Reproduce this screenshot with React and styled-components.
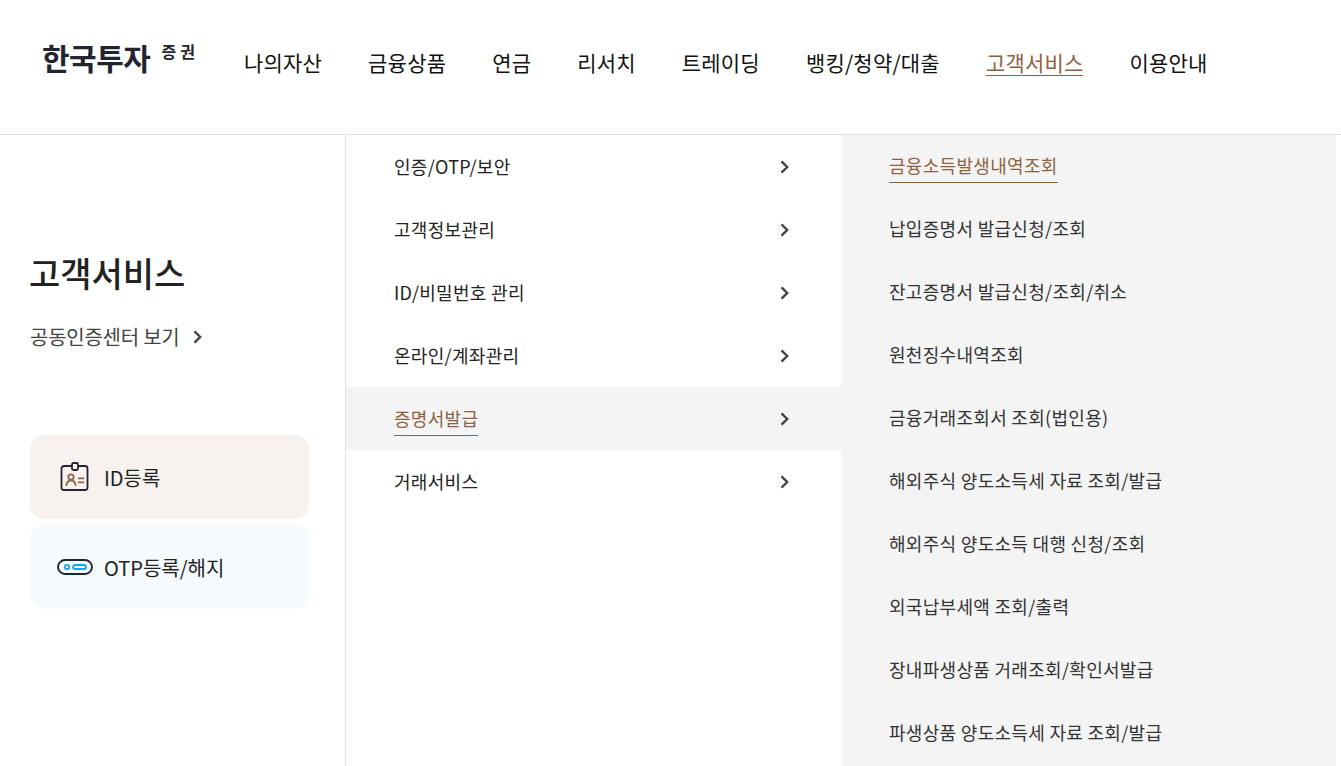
import styled, { createGlobalStyle } from "styled-components"

const GlobalStyle = createGlobalStyle`
  html, body {
    margin: 0;
    height: 100%;
    overflow: hidden;
    background: #fff;
  }

  body {
    font-family: "Noto Sans CJK KR", "Noto Sans", sans-serif;
    color: #222;
  }

  * {
    box-sizing: border-box;
  }
`

const Page = styled.div`
  height: 766px;
  overflow: hidden;
`

const Header = styled.header`
  height: 135px;
  display: flex;
  border-bottom: 1px solid #e0e0e0;
`

const Logo = styled.div`
  width: 244px;
  padding: 36px 0 0 42px;
  display: flex;
  align-items: flex-start;
  color: #22252f;
`

const LogoName = styled.span`
  font-size: 30px;
  line-height: 42px;
  font-weight: 700;
  letter-spacing: -0.5px;
`

const LogoSub = styled.span`
  font-size: 16px;
  line-height: 20px;
  font-weight: 700;
  letter-spacing: 4px;
  margin: 5px 0 0 11px;
`

const Nav = styled.nav`
  display: flex;
  gap: 46px;
  padding-top: 46px;
`

const NavItem = styled.a`
  height: 30px;
  font-size: 21px;
  line-height: 32px;
  letter-spacing: 0.2px;
  color: ${(p) => (p.$active ? "#8f623f" : "#111")};
  border-bottom: ${(p) => (p.$active ? "1px solid #8f623f" : "none")};
`

const Body = styled.div`
  height: 631px;
  display: grid;
  grid-template-columns: 345px 496px 495px 5px;
`

const Side = styled.aside`
  padding: 111px 30px 0 30px;
`

const Title = styled.h2`
  margin: 0 0 0 -1px;
  font-size: 34px;
  line-height: 54px;
  font-weight: 500;
  color: #222;
`

const CertLink = styled.a`
  margin-top: 20px;
  display: flex;
  align-items: center;
  gap: 12px;
  font-size: 20px;
  line-height: 34px;
  letter-spacing: -0.25px;
  color: #444;
`

const Cards = styled.div`
  margin-top: 81px;
  width: 279px;
  display: flex;
  flex-direction: column;
  gap: 6px;
`

const Card = styled.a`
  height: 84px;
  border-radius: 14px;
  background: ${(p) => p.$bg};
  display: flex;
  align-items: center;
  gap: 11px;
  padding-left: 27px;
  font-size: 20px;
  color: #222;
`

const CardIcon = styled.span`
  width: 36px;
  display: flex;
  justify-content: center;
`

const Middle = styled.div`
  border-left: 1px solid #e0e0e0;
`

const MenuRow = styled.a`
  height: 63px;
  display: flex;
  align-items: center;
  justify-content: space-between;
  padding: 0 49px 0 48px;
  background: ${(p) => (p.$active ? "#f4f4f4" : "transparent")};
`

const MenuLabel = styled.span`
  font-size: 18px;
  line-height: 32px;
  padding-bottom: 1px;
  letter-spacing: 0.3px;
  color: ${(p) => (p.$active ? "#8f623f" : "#222")};
  border-bottom: 1px solid ${(p) => (p.$active ? "#8f623f" : "transparent")};
`

const Right = styled.div`
  background: #f4f4f4;
  padding: 0 48px;
`

const SubRow = styled.div`
  height: 63px;
  display: flex;
  align-items: center;
`

const SubLabel = styled.a`
  font-size: 18px;
  line-height: 28px;
  padding-bottom: 3px;
  letter-spacing: 0.3px;
  color: ${(p) => (p.$active ? "#8f623f" : "#333")};
  border-bottom: 1px solid ${(p) => (p.$active ? "#8f623f" : "transparent")};
`

const Chevron = () => (
  <svg width="14" height="14" viewBox="0 0 14 14" fill="none">
    <path d="M3.500 1.300 9.200 7 3.500 12.700" stroke="#444" strokeWidth="2.400" />
  </svg>
)

const IdIcon = () => (
  <svg width="30" height="30" viewBox="0 0 30 30" fill="none">
    <path d="M12 4H4a2.500 2.500 0 0 0-2.500 2.500v19A2.500 2.500 0 0 0 4 28h21a2.500 2.500 0 0 0 2.500-2.500v-19A2.500 2.500 0 0 0 25 4h-7" stroke="#22252f" strokeWidth="1.800" />
    <rect x="12" y="1" width="6" height="7" rx="1.500" stroke="#22252f" strokeWidth="1.800" />
    <circle cx="11" cy="15" r="2.700" stroke="#8f6a4f" strokeWidth="1.800" />
    <path d="M6.300 24c.3-3.500 2-5.500 4.700-5.500s4.400 2 4.700 5.500" stroke="#8f6a4f" strokeWidth="1.800" />
    <path d="M18 16.300h6.300M18 20.300h6.300" stroke="#8f6a4f" strokeWidth="1.800" />
  </svg>
)

const OtpIcon = () => (
  <svg width="36" height="16" viewBox="0 0 36 16" fill="none">
    <rect x="1" y="1" width="34" height="14" rx="7" stroke="#22252f" strokeWidth="1.900" />
    <circle cx="10" cy="8" r="2.200" stroke="#12a5f5" strokeWidth="1.800" />
    <rect x="16" y="6" width="13" height="4" rx="2" stroke="#12a5f5" strokeWidth="1.800" />
  </svg>
)

const navItems = ["나의자산", "금융상품", "연금", "리서치", "트레이딩", "뱅킹/청약/대출", "고객서비스", "이용안내"]
const menuItems = ["인증/OTP/보안", "고객정보관리", "ID/비밀번호 관리", "온라인/계좌관리", "증명서발급", "거래서비스"]
const subItems = [
  "금융소득발생내역조회",
  "납입증명서 발급신청/조회",
  "잔고증명서 발급신청/조회/취소",
  "원천징수내역조회",
  "금융거래조회서 조회(법인용)",
  "해외주식 양도소득세 자료 조회/발급",
  "해외주식 양도소득 대행 신청/조회",
  "외국납부세액 조회/출력",
  "장내파생상품 거래조회/확인서발급",
  "파생상품 양도소득세 자료 조회/발급",
]

export default function App() {
  return (
    <Page>
      <GlobalStyle />
      <Header>
        <Logo>
          <LogoName>한국투자</LogoName>
          <LogoSub>증권</LogoSub>
        </Logo>
        <Nav>
          {navItems.map((item) => (
            <NavItem key={item} $active={item === "고객서비스"}>
              {item}
            </NavItem>
          ))}
        </Nav>
      </Header>
      <Body>
        <Side>
          <Title>고객서비스</Title>
          <CertLink>
            공동인증센터 보기
            <Chevron />
          </CertLink>
          <Cards>
            <Card $bg="#f7f2ee">
              <CardIcon>
                <IdIcon />
              </CardIcon>
              ID등록
            </Card>
            <Card $bg="#f5fafd">
              <CardIcon>
                <OtpIcon />
              </CardIcon>
              OTP등록/해지
            </Card>
          </Cards>
        </Side>
        <Middle>
          {menuItems.map((item) => (
            <MenuRow key={item} $active={item === "증명서발급"}>
              <MenuLabel $active={item === "증명서발급"}>{item}</MenuLabel>
              <Chevron />
            </MenuRow>
          ))}
        </Middle>
        <Right>
          {subItems.map((item, i) => (
            <SubRow key={item}>
              <SubLabel $active={i === 0}>{item}</SubLabel>
            </SubRow>
          ))}
        </Right>
        <div />
      </Body>
    </Page>
  )
}
